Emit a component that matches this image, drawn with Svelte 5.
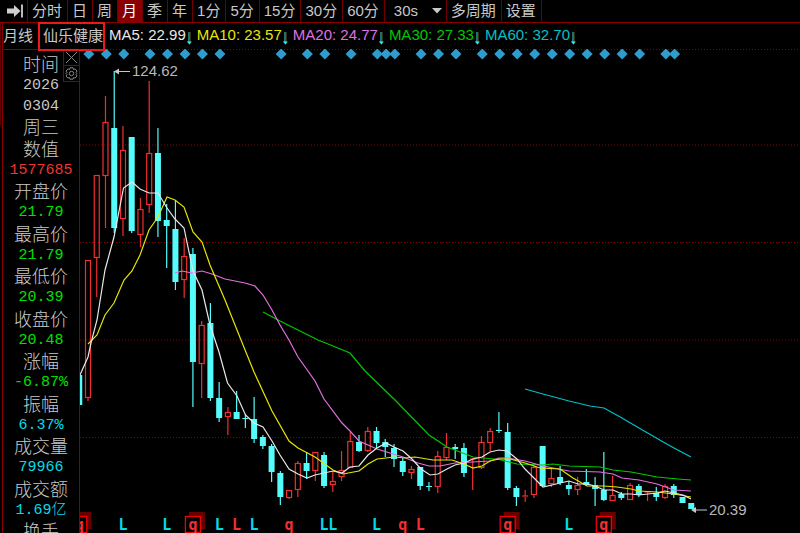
<script>
  const STEP = 8.743;
  const FIRST = 88;

  const periods = ["分时", "日", "周", "月", "季", "年", "1分", "5分", "15分", "30分", "60分"];
  let period = "月";
  let custom = "30s";
  let panelOpen = true;

  const averages = [
    { name: "MA5", value: "22.99", cls: "ma5" },
    { name: "MA10", value: "23.57", cls: "ma10" },
    { name: "MA20", value: "24.77", cls: "ma20" },
    { name: "MA30", value: "27.33", cls: "ma30" },
    { name: "MA60", value: "32.70", cls: "ma60" },
  ];

  const details = [
    { label: "时间", values: ["2026", "0304", "周三"], cls: "plain" },
    { label: "数值", values: ["1577685"], cls: "up" },
    { label: "开盘价", values: ["21.79"], cls: "down" },
    { label: "最高价", values: ["21.79"], cls: "down" },
    { label: "最低价", values: ["20.39"], cls: "down" },
    { label: "收盘价", values: ["20.48"], cls: "down" },
    { label: "涨幅", values: ["-6.87%"], cls: "down" },
    { label: "振幅", values: ["6.37%"], cls: "info" },
    { label: "成交量", values: ["79966"], cls: "info" },
    { label: "成交额", values: ["1.69亿"], cls: "info" },
    { label: "换手", values: [], cls: "info" },
  ];

  // [rising, high, body top, body bottom, low], first one sits at slot -1
  const candles = [
    [0, 375, 375, 405, 405],
    [1, 260, 260, 397, 401],
    [1, 175, 175, 257, 297],
    [1, 96, 122, 175, 228],
    [0, 71, 128, 228, 233],
    [1, 126, 150, 218, 236],
    [0, 137, 137, 231, 233],
    [1, 198, 209, 234, 247],
    [1, 81, 153, 204, 213],
    [0, 128, 153, 221, 237],
    [0, 204, 220, 226, 268],
    [0, 200, 229, 282, 290],
    [1, 238, 256, 279, 298],
    [0, 248, 254, 362, 407],
    [1, 321, 325, 363, 398],
    [0, 303, 323, 398, 401],
    [0, 382, 398, 418, 422],
    [1, 407, 412, 416, 435],
    [0, 391, 412, 419, 419],
    [0, 414, 418, 419, 428],
    [0, 397, 419, 439, 443],
    [0, 435, 437, 446, 449],
    [0, 444, 446, 472, 482],
    [0, 471, 473, 497, 505],
    [1, 490, 490, 497, 499],
    [1, 461, 463, 489, 497],
    [0, 452, 463, 471, 479],
    [1, 452, 452, 470, 481],
    [0, 452, 455, 486, 488],
    [1, 472, 481, 484, 492],
    [1, 451, 470, 476, 481],
    [1, 432, 441, 467, 467],
    [0, 435, 442, 451, 452],
    [1, 427, 431, 450, 452],
    [0, 427, 431, 443, 448],
    [0, 439, 442, 447, 457],
    [0, 444, 448, 459, 467],
    [0, 458, 461, 472, 476],
    [1, 466, 469, 472, 479],
    [0, 467, 467, 486, 490],
    [0, 482, 486, 487, 491],
    [1, 451, 456, 486, 493],
    [1, 433, 447, 457, 460],
    [0, 444, 447, 449, 459],
    [0, 443, 448, 473, 477],
    [1, 458, 459, 459, 490],
    [1, 436, 442, 467, 469],
    [1, 428, 431, 442, 451],
    [0, 412, 430, 431, 433],
    [0, 423, 432, 488, 490],
    [0, 486, 488, 497, 506],
    [1, 490, 496, 497, 502],
    [1, 465, 467, 494, 498],
    [0, 446, 446, 486, 486],
    [1, 468, 478, 483, 487],
    [0, 466, 477, 483, 485],
    [0, 481, 485, 489, 495],
    [1, 477, 485, 489, 495],
    [0, 469, 482, 485, 486],
    [0, 477, 485, 489, 506],
    [0, 452, 490, 500, 501],
    [1, 476, 495, 500, 500],
    [0, 492, 494, 498, 500],
    [1, 483, 485, 499, 499],
    [0, 484, 486, 495, 497],
    [1, 491, 492, 492, 501],
    [0, 487, 493, 497, 501],
    [1, 484, 486, 497, 499],
    [0, 484, 486, 495, 498],
    [0, 497, 497, 503, 503],
    [0, 503, 503, 509, 509],
  ].map(([rising, high, top, bottom, low], i) => ({
    x: FIRST + (i - 1) * STEP,
    rising,
    high,
    top,
    bottom,
    low,
  }));

  const lines = [
    {
      cls: "ma60",
      points:
        "525,389 543,394 569,401 590,406 604,408 622,418 627,421 639,428 665,443 674,448 691,457",
    },
    {
      cls: "ma30",
      points:
        "263,312 280,321 300,331 318,340 333,346 350,353 365,371 395,400 429,435 447,447 473,457 499,459.5 517,464 543,465 553,464 569,466 600,467 613,470 631,472 657,477 678,479 691,480",
    },
    {
      cls: "ma20",
      points:
        "175,273 182,271 192,273 202,271 212,274 225,279 245,283 255,286 263,295 272,310 280,325 289,340 298,357 315,381 324,399 342,423 350,431 359,441 377,449 403,457 418,463 429,466 440,466 455,463 472,462 490,461 499,458 507,458 525,461 543,466 569,471 600,472 613,474 622,478 639,480 657,484 674,490 691,491",
    },
    {
      cls: "ma10",
      points:
        "88,344 97,335 105,315 114,303 124,280 132,271 140,255 149,230 158,217 167,197 175,200 184,207 193,232 202,242 210,265 225,300 241,340 254,372 272,411 289,441 298,448 315,457 333,470 343,474 359,471 368,464 377,459 386,458 394,457 405,458 415,457 433,460 452,460 464,464 473,468 482,466 490,461 499,459 510,459 525,463 540,468 560,469 573,478 587,486 604,486 617,487 631,489 639,491 657,492 674,494 691,497",
    },
    {
      cls: "ma5",
      points:
        "80,375 88,357 91,343 97,320 105,270 114,237 123.5,188 132,182 140,189 149,193 158,193 167,208 175,219 184,228 193,271 202,290 210,325 219,352 227.5,383 237,396 245.5,415 254,423 263,427 272,441 280,455 289,469 298,474 307,478 315,475 324,473 333,471 342,473 350,467 359,466 368,455 377,448 386,443 394,447 403,451 412,459 421,469 430,475 438,474 447,469 455,465 464,463 473,459 482,457 490,452 499,450 507,451 517,459 525,469 534,478 543,487 552,485 560,483 569,481 578,484 587,484 595,486 604,490 613,490 622,494 631,494 639,495 648,494 657,493 665,491 674,493 683,495 691,499",
    },
  ];

  const gridLines = [49.5, 145, 242.5, 340, 437.5];

  // slots that carry a news diamond
  const diamonds = [
    0, 2, 4, 7, 9, 11, 13, 15, 22, 25, 27, 30, 33, 34, 35, 38, 40, 42, 45, 47, 49, 51, 53, 55, 57,
    59, 61, 63, 66, 67,
  ];

  const marks = [
    { slot: -1, text: "q", boxed: true },
    { slot: 4, text: "L" },
    { slot: 9, text: "L" },
    { slot: 12, text: "q", boxed: true },
    { slot: 15, text: "L" },
    { slot: 17, text: "L", red: true },
    { slot: 19, text: "L" },
    { slot: 23, text: "q" },
    { slot: 27, text: "L" },
    { slot: 28, text: "L" },
    { slot: 33, text: "L" },
    { slot: 36, text: "q" },
    { slot: 38, text: "L", red: true },
    { slot: 48, text: "q", boxed: true },
    { slot: 55, text: "L" },
    { slot: 59, text: "q", boxed: true },
  ];

  const slotX = (slot) => FIRST + slot * STEP;
</script>

<div class="app">
  <nav class="toolbar">
    <button class="jump" aria-label="Jump to latest">
      <svg width="17" height="16" viewBox="0 0 17 16">
        <path d="M0 5.500h7V2l6.500 6-6.500 6v-3.500H0z" fill="#d0d0d0" />
        <path d="M15 1.500v13" stroke="#d0d0d0" stroke-width="1.800" />
      </svg>
    </button>
    {#each periods as item}
      <button class:selected={item === period} on:click={() => (period = item)}>{item}</button>
    {/each}
    <div class="custom">
      <select bind:value={custom} aria-label="Custom period">
        <option>30s</option>
        <option>45s</option>
        <option>90s</option>
      </select>
      <svg width="10" height="6" viewBox="0 0 10 6"><path d="M0 0h10L5 5.500z" fill="#c8c8c8" /></svg>
    </div>
    <button>多周期</button>
    <button>设置</button>
  </nav>

  <div class="frame">
    <div class="rail"><i></i></div>
    <div class="content">
      <header class="legend">
        <span class="kind">月线</span>
        <span class="stock">仙乐健康</span>
        {#each averages as ma}
          <span class="average {ma.cls}">
            {ma.name}: {ma.value}<svg width="7" height="14" viewBox="0 0 7 14">
              <path d="M3 1v10" stroke="#2a9a9a" stroke-width="1.500" />
              <path d="M4.200 1v10" stroke="#5a5a20" stroke-width=".8" />
              <path d="M.8 10.500h5L3.400 13.500z" fill="#40e8e8" />
            </svg>
          </span>
        {/each}
      </header>

      <div class="main">
        {#if panelOpen}
          <aside>
            <dl>
              {#each details as row}
                <dt>{row.label}</dt>
                {#each row.values as value}
                  <dd class={row.cls}>{value}</dd>
                {/each}
              {/each}
            </dl>
            <div class="tools">
              <button aria-label="Close" on:click={() => (panelOpen = false)}>
                <svg width="13" height="13" viewBox="0 0 13 13">
                  <path d="M1 1l11 11M12 1L1 12" stroke="#888" fill="none" />
                </svg>
              </button>
              <button aria-label="Settings">
                <svg width="13" height="13" viewBox="0 0 13 13" fill="none" stroke="#888">
                  <path
                    d="M5 .8h3l.5 1.700 1.600-.6 1.900 2.200-1 1.300.8 1.100-.8 1.100 1 1.300-1.900 2.200-1.600-.6-.5 1.700H5l-.5-1.700-1.600.6L1 8.900l1-1.300-.8-1.100.8-1.100-1-1.300 1.900-2.200 1.600.6z"
                  />
                  <circle cx="6.500" cy="6.500" r="2.200" />
                </svg>
              </button>
            </div>
          </aside>
        {/if}

        <svg class="chart" viewBox="80 49 720 484" role="img" aria-label="仙乐健康 月线">
          {#each gridLines as y}
            <path class="grid" d="M80 {y}H800" />
          {/each}

          {#each candles as c}
            {#if c.rising}
              <g class="rise">
                <path d="M{c.x} {c.high}V{c.top}M{c.x} {c.bottom}V{c.low}" />
                {#if c.bottom - c.top < 2}
                  <path d="M{c.x - 3} {c.top}h6" />
                {:else}
                  <rect x={c.x - 2.5} y={c.top + 0.5} width="5" height={c.bottom - c.top} />
                {/if}
              </g>
            {:else}
              <g class="fall">
                <path d="M{c.x} {c.high}V{c.low}" />
                <rect x={c.x - 3} y={c.top} width="6" height={c.bottom - c.top} />
              </g>
            {/if}
          {/each}

          {#each lines as line}
            <polyline class="line {line.cls}" points={line.points} />
          {/each}

          {#each diamonds as slot}
            <path class="diamond" d="M{slotX(slot) + 0.8} 48.500l5.500 5.500-5.500 5.500-5.500-5.500z" />
          {/each}

          <g class="note">
            <path d="M116 71.500H130" />
            <path class="head" d="M114 71.500l5-3v6z" />
            <text x="132" y="76">124.62</text>
            <path d="M694 510H707" />
            <path class="head" d="M691 510l5-3v6z" />
            <text x="709" y="515">20.39</text>
          </g>

          {#each marks as m}
            {#if m.boxed}
              <rect class="shadow" x={slotX(m.slot) - 4} y="512" width="16" height="17" />
              <rect class="box" x={slotX(m.slot) - 7.5} y="516.500" width="15" height="16" />
            {/if}
            <text class="mark" class:red={m.red || m.text === "q"} x={slotX(m.slot)} y="530">
              {m.text}
            </text>
          {/each}
        </svg>
      </div>
    </div>
  </div>
</div>

<style>
  :global(body) {
    background: #000;
  }

  .app {
    display: flex;
    flex-direction: column;
    height: 100vh;
    overflow: hidden;
    background: #000;
    color: #c8c8c8;
    font-family: "Liberation Sans", "Noto Sans CJK SC", sans-serif;
    font-size: 15px;
  }

  button,
  select {
    border: none;
    border-radius: 0;
    background: transparent;
    color: inherit;
    font: inherit;
    cursor: pointer;
  }

  .toolbar {
    display: flex;
    flex: none;
    height: 22px;
    border-bottom: 1px solid #8a0000;
  }
  .toolbar button {
    padding: 0 5px 0 4px;
    border-right: 1px solid #700000;
    line-height: 22px;
    white-space: nowrap;
  }
  .toolbar .jump {
    display: flex;
    align-items: center;
    padding: 0 3px 0 7px;
  }
  .toolbar .selected {
    background: #8a0000;
    color: #fff;
  }
  .custom {
    display: grid;
    align-items: center;
    width: 61px;
    border-right: 1px solid #700000;
  }
  .custom select {
    grid-area: 1 / 1;
    appearance: none;
    height: 20px;
    margin-bottom: 2px;
    padding: 0 0 0 9px;
    outline: none;
  }
  .custom svg {
    grid-area: 1 / 1;
    justify-self: end;
    margin-right: 4px;
    pointer-events: none;
  }

  .frame {
    display: flex;
    flex: 1;
    min-height: 0;
  }
  .rail {
    width: 2px;
    border-right: 1px solid #8a0000;
  }
  .rail i {
    display: block;
    width: 1px;
    height: 102px;
    background: #600000;
  }
  .content {
    display: flex;
    flex: 1;
    flex-direction: column;
    min-width: 0;
  }

  .legend {
    display: flex;
    flex: none;
    align-items: center;
    height: 26px;
    line-height: 24px;
    white-space: nowrap;
  }
  .kind {
    margin-right: 5px;
  }
  .stock {
    z-index: 1;
    height: 25px;
    margin: -1px 4px -2px 0;
    padding: 0 0 0 3px;
    border: 2px solid #ee1818;
  }
  .average {
    display: flex;
    align-items: center;
    height: 24px;
    margin: 0 4px 2px 0;
  }
  .average svg {
    margin-top: 5px;
  }

  .ma5 {
    color: #e8e8e8;
  }
  .ma10 {
    color: #e6e600;
  }
  .ma20 {
    color: #e070e0;
  }
  .ma30 {
    color: #00c800;
  }
  .ma60 {
    color: #00c0c8;
  }

  .main {
    display: flex;
    flex: 1;
    align-items: stretch;
    min-height: 0;
  }
  aside {
    position: relative;
    flex: none;
    box-sizing: border-box;
    width: 77px;
    overflow: hidden;
    border-top: 1px solid #8a0000;
    border-right: 1px solid #8a0000;
  }
  dl {
    margin: 0;
    padding-top: 4px;
    text-align: center;
  }
  dt,
  dd {
    height: 21px;
    margin: 0;
    line-height: 23px;
    font-size: 18px;
    font-weight: 300;
  }
  dd {
    line-height: 21px;
    font-family: "Liberation Mono", "Noto Sans CJK SC", monospace;
    font-size: 15px;
  }
  dd:nth-child(4) {
    line-height: 23px;
    font-family: inherit;
    font-size: 18px;
  }
  dl > :nth-child(4n) {
    padding-bottom: 1px;
  }
  .up {
    color: #f03434;
  }
  .down {
    color: #00e000;
  }
  .info {
    color: #00dce8;
  }

  .tools {
    position: absolute;
    top: 0;
    right: 0;
    display: flex;
    flex-direction: column;
  }
  .tools button {
    display: grid;
    place-items: center;
    box-sizing: border-box;
    width: 16px;
    height: 16px;
    padding: 0;
    border-bottom: 1px solid #8a0000;
    border-left: 1px solid #8a0000;
  }

  .chart {
    flex: 1;
    align-self: flex-start;
    min-width: 0;
  }
  .grid {
    stroke: #8a0000;
    stroke-dasharray: 1 2;
  }
  .rise {
    fill: none;
    stroke: #f03030;
    stroke-width: 1.2;
  }
  .fall {
    fill: #54fcfc;
  }
  .fall path {
    stroke: #54fcfc;
    stroke-width: 1.2;
  }
  .line {
    fill: none;
    stroke: currentColor;
    stroke-width: 1.2;
  }
  .diamond {
    fill: #2e9ccc;
  }
  .note {
    fill: #b8b8b8;
    font-size: 15px;
  }
  .note path {
    stroke: #c8c8c8;
  }
  .note .head {
    fill: #c8c8c8;
    stroke: none;
  }
  .shadow {
    fill: #680000;
  }
  .box {
    fill: #000;
    stroke: #f00000;
    stroke-width: 1.3;
  }
  .mark {
    fill: #00dce8;
    font-family: "DejaVu Sans Mono", monospace;
    font-size: 15px;
    font-weight: bold;
    text-anchor: middle;
  }
  .mark.red {
    fill: #f03030;
  }
</style>
